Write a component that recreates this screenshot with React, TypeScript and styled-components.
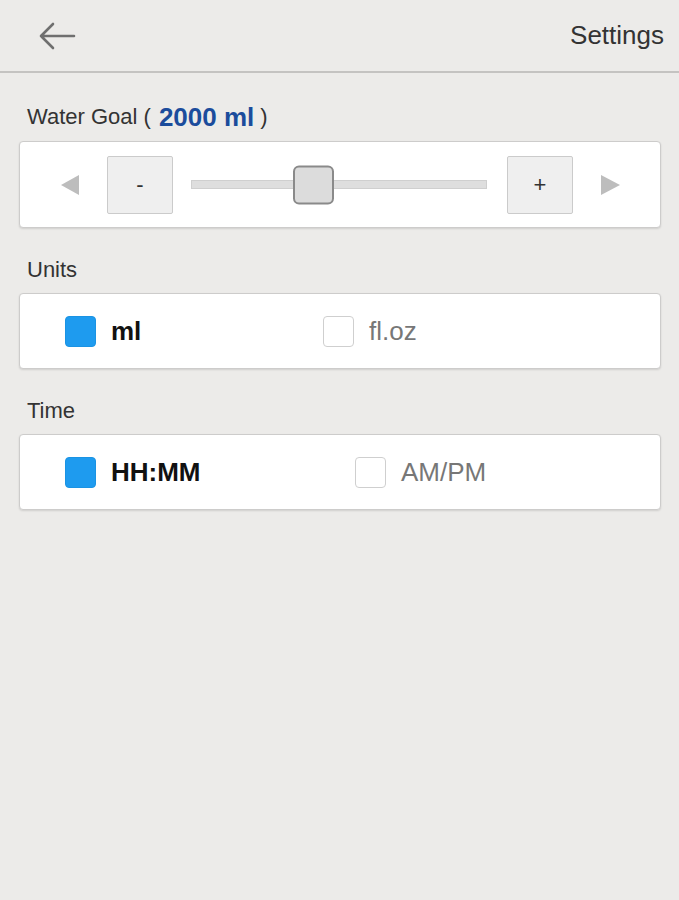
import React from 'react';
import styled, { createGlobalStyle } from 'styled-components';

const GlobalStyle = createGlobalStyle`
  html, body {
    margin: 0;
    padding: 0;
    background-color: #ecebe9;
  }
  body {
    font-family: 'Liberation Sans', Arial, sans-serif;
    color: #333;
  }
  * {
    box-sizing: border-box;
  }
`;

const Page = styled.div`
  min-height: 900px;
  background-color: #ecebe9;
`;

const Header = styled.header`
  height: 73px;
  display: flex;
  align-items: center;
  justify-content: space-between;
  padding: 0 15px 0 38px;
  border-bottom: 2px solid #c4c3c1;
`;

const BackButton = styled.button`
  border: none;
  background: none;
  padding: 0;
  display: flex;
  align-items: center;
  cursor: pointer;
`;

const Title = styled.h1`
  margin: 0;
  font-size: 26px;
  font-weight: normal;
  color: #333;
  line-height: 1;
  margin-bottom: 2px;
`;

const Content = styled.main`
  padding: 0 18px 0 19px;
`;

const SectionLabel = styled.div<{ $first?: boolean }>`
  margin: ${({ $first }) => ($first ? '32px 0 12px 8px' : '30px 0 11px 8px')};
  height: 24px;
  line-height: 24px;
  font-size: 22px;
  color: #333;
  display: flex;
  align-items: center;
  white-space: pre;
`;

const LabelValue = styled.span`
  font-size: 26px;
  font-weight: bold;
  color: #1b4c9c;
  margin: 0 6px 0 8px;
`;

const Card = styled.section<{ $height: number }>`
  height: ${({ $height }) => $height}px;
  background-color: #fff;
  border: 1px solid #cdcccb;
  border-radius: 4px;
  box-shadow: 0 1px 2px rgba(0, 0, 0, 0.12);
  display: flex;
  align-items: center;
`;

const SliderRow = styled.div`
  flex: 1;
  display: flex;
  align-items: center;
  padding: 0 40px 0 41px;
`;

const Arrow = styled.span<{ $dir: 'left' | 'right' }>`
  width: 0;
  height: 0;
  border-top: 10px solid transparent;
  border-bottom: 10px solid transparent;
  ${({ $dir }) =>
    $dir === 'left'
      ? 'border-right: 18px solid #bdbdbd; margin-right: 28px;'
      : 'border-left: 19px solid #bdbdbd; margin-left: 28px;'}
`;

const StepButton = styled.button`
  width: 66px;
  height: 58px;
  flex: none;
  background-color: #efefef;
  border: 1px solid #cbcbcb;
  border-radius: 2px;
  font-family: 'Liberation Sans', Arial, sans-serif;
  font-size: 22px;
  color: #333;
  padding: 0;
  display: flex;
  align-items: center;
  justify-content: center;
`;

const Track = styled.div`
  position: relative;
  flex: 1;
  height: 9px;
  margin: 0 20px 0 18px;
  background-color: #dedede;
  border: 1px solid #cfcfcf;
`;

const Thumb = styled.div`
  position: absolute;
  top: 50%;
  width: 41px;
  height: 39px;
  transform: translateY(-50%);
  background-color: #dcdcdc;
  border: 2px solid #8a8a8a;
  border-radius: 6px;
`;

const OptionRow = styled.div`
  display: flex;
  align-items: center;
  padding-left: 45px;
`;

const Option = styled.label<{ $width?: number }>`
  display: flex;
  align-items: center;
  gap: 15px;
  width: ${({ $width }) => ($width ? `${$width}px` : 'auto')};
  cursor: pointer;
`;

const Box = styled.span<{ $checked: boolean }>`
  width: 31px;
  height: 31px;
  border-radius: 4px;
  background-color: ${({ $checked }) => ($checked ? '#1e9bef' : '#fff')};
  border: 1.5px solid ${({ $checked }) => ($checked ? '#1b93e3' : '#cfcfcf')};
`;

const OptionText = styled.span<{ $checked: boolean }>`
  font-size: 26px;
  font-weight: ${({ $checked }) => ($checked ? 'bold' : 'normal')};
  color: ${({ $checked }) => ($checked ? '#111' : '#777')};
`;

const BackArrow = () => (
  <svg width="38" height="30" viewBox="0 0 38 30" fill="none">
    <path
      d="M3 15 H36 M15 3 L3 15 L15 27"
      stroke="#6f6f6f"
      strokeWidth="2.6"
      strokeLinecap="round"
      strokeLinejoin="round"
    />
  </svg>
);

const goal = { min: 500, max: 4250, value: 2000 };

const App: React.FC = () => {
  const fraction = (goal.value - goal.min) / (goal.max - goal.min);

  const options = [
    {
      label: 'Units',
      first: { text: 'ml', width: 258 },
      second: 'fl.oz',
    },
    {
      label: 'Time',
      first: { text: 'HH:MM', width: 290 },
      second: 'AM/PM',
    },
  ];

  return (
    <Page>
      <GlobalStyle />
      <Header>
        <BackButton aria-label="Back">
          <BackArrow />
        </BackButton>
        <Title>Settings</Title>
      </Header>

      <Content>
        <SectionLabel $first>
          Water Goal (<LabelValue>{goal.value} ml</LabelValue>)
        </SectionLabel>
        <Card $height={87}>
          <SliderRow>
            <Arrow $dir="left" />
            <StepButton>-</StepButton>
            <Track>
              <Thumb style={{ left: `calc(${fraction * 100}% - ${fraction * 41}px)` }} />
            </Track>
            <StepButton>+</StepButton>
            <Arrow $dir="right" />
          </SliderRow>
        </Card>

        {options.map(group => (
          <React.Fragment key={group.label}>
            <SectionLabel>{group.label}</SectionLabel>
            <Card $height={76}>
              <OptionRow>
                <Option $width={group.first.width}>
                  <Box $checked />
                  <OptionText $checked>{group.first.text}</OptionText>
                </Option>
                <Option>
                  <Box $checked={false} />
                  <OptionText $checked={false}>{group.second}</OptionText>
                </Option>
              </OptionRow>
            </Card>
          </React.Fragment>
        ))}
      </Content>
    </Page>
  );
};

export default App;
